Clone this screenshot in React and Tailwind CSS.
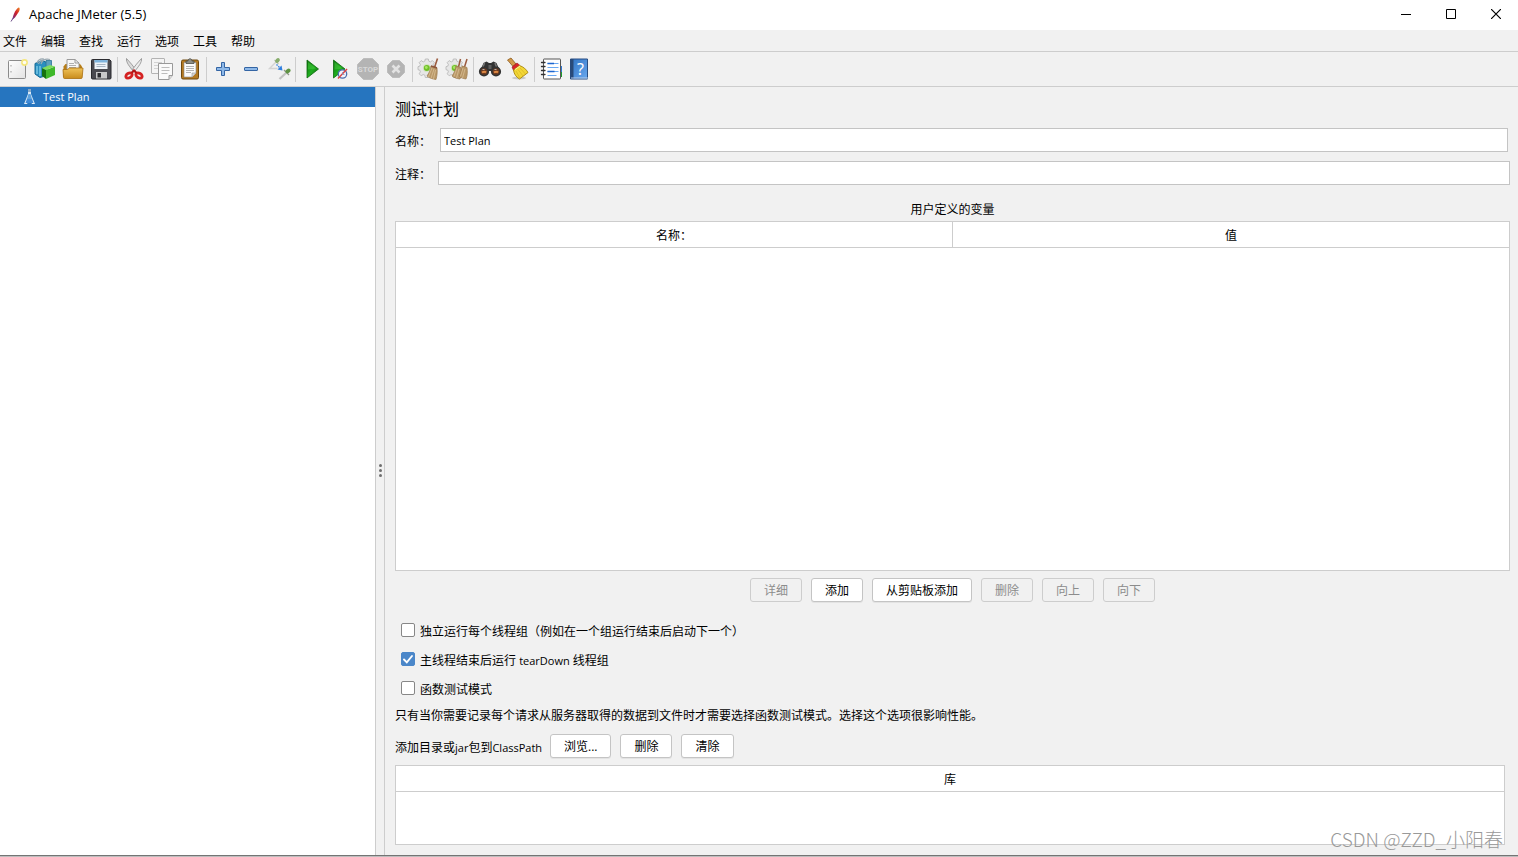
import clsx from 'clsx'
import { useState } from 'react'

const menus = ['文件', '编辑', '查找', '运行', '选项', '工具', '帮助']

function Gradients() {
  return (
    <svg aria-hidden="true" className="absolute h-0 w-0">
      <defs>
        <linearGradient id="green" x1="0" x2="1" y1="0" y2="1">
          <stop offset="0" stopColor="#0a6b0c" />
          <stop offset="0.5" stopColor="#1fae1f" />
          <stop offset="1" stopColor="#0b5a0b" />
        </linearGradient>
        <linearGradient id="folder" x1="0" x2="0" y1="0" y2="1">
          <stop offset="0" stopColor="#f0c35a" />
          <stop offset="1" stopColor="#c98c1c" />
        </linearGradient>
        <linearGradient id="paper" x1="0" x2="1" y1="0" y2="1">
          <stop offset="0" stopColor="#ffffff" />
          <stop offset="1" stopColor="#e2e2e2" />
        </linearGradient>
        <linearGradient id="book" x1="0" x2="1" y1="0" y2="1">
          <stop offset="0" stopColor="#2f74c4" />
          <stop offset="1" stopColor="#6aa8ee" />
        </linearGradient>
        <linearGradient id="quill" x1="1" x2="0" y1="0" y2="1">
          <stop offset="0" stopColor="#f08a24" />
          <stop offset="0.45" stopColor="#d2232a" />
          <stop offset="1" stopColor="#6a2b86" />
        </linearGradient>
      </defs>
    </svg>
  )
}

function Icon({ children }) {
  return (
    <svg aria-hidden="true" className="h-6 w-6" fill="none" viewBox="0 0 24 24">
      {children}
    </svg>
  )
}

function NewIcon() {
  return (
    <Icon>
      <rect fill="url(#paper)" height="18" rx="1" stroke="#8b8b8b" width="17" x="3.5" y="3.5" />
      <path d="M6 8v1.5M6 14v1.5" stroke="#999" />
      <circle cx="19.5" cy="5.5" fill="#f5e67c" r="3.4" />
      <circle cx="19.5" cy="5.5" fill="#fffdf0" r="1.8" />
    </Icon>
  )
}

function TemplatesIcon() {
  return (
    <Icon>
      <path d="M2 6.500 9 3.500l5 2v13L7 20.500 2 17z" fill="#2a8fc0" stroke="#156a96" />
      <path d="M13 3.500h5.500V10H13z" fill="#5b9fbe" stroke="#2a7398" strokeWidth="0.8" />
      <path d="M4 6c1-3 4-4.500 7-4M8 7c1.500-4 5-5.500 9-4.500M5.500 7c1-3 3-4 6-4" stroke="#9aa9b2" strokeWidth="1.2" />
      <path d="M4 9v8M7 9v10" stroke="#7ccbe8" strokeWidth="1.4" />
      <path d="m9 11 4 2v9l-4-3z" fill="#14710f" />
      <path d="m13 13 9-3.500v8.500l-9 4z" fill="#3fb82a" />
      <path d="m9 11 8-3 5 1.500-9 3.500z" fill="#7fdc5f" />
    </Icon>
  )
}

function OpenIcon() {
  return (
    <Icon>
      <path d="M2.500 20V9.500l2-2.500H19l2 2.500V20z" fill="#b77d16" />
      <path d="M6 14V2.500h8L18 6v8z" fill="#f7f7f7" stroke="#9b9b9b" />
      <path d="M8 6.500h5M8 8.500h7M8 10.500h7" stroke="#b0b0b0" />
      <path d="M14 2.500V6h4" stroke="#9b9b9b" />
      <path d="M2 12.500h4.500l2-1.500h13.500l-.8 9.500c0 .6-.5 1-1 1H3.500c-.6 0-1-.4-1-1z" fill="url(#folder)" stroke="#a86f10" strokeWidth="0.8" />
    </Icon>
  )
}

function SaveIcon() {
  return (
    <Icon>
      <path d="M2.500 3.500c0-.6.4-1 1-1h17l1.500 1.500v17c0 .6-.4 1-1 1H3.500c-.6 0-1-.4-1-1z" fill="#4a4a50" stroke="#2b2b2f" />
      <path d="M5.500 3h13v9h-13z" fill="#eef3f8" />
      <path d="M5.500 3h13v2.500h-13z" fill="#7fb4dd" />
      <path d="M7.500 7.500h9M7.500 9.500h9" stroke="#a6b4c2" />
      <path d="M7 15h11v6.500H7z" fill="#c9c9c9" />
      <path d="M8.500 16h3.500v4.500H8.500z" fill="#2c2c30" />
    </Icon>
  )
}

function CutIcon() {
  return (
    <Icon>
      <path d="M4.500 1.500c-.5 4 3 8 7 13l2.500-1.500C11 9 8 5 4.500 1.500z" fill="#dcdcdc" stroke="#8b8b8b" strokeWidth="0.8" />
      <path d="M19.500 1.500c.5 4-3 8-7 13L10 13c3-4 6-8 9.500-11.500z" fill="#ececec" stroke="#8b8b8b" strokeWidth="0.8" />
      <ellipse cx="7" cy="18.500" rx="3.400" ry="2.300" stroke="#d42222" strokeWidth="2.800" transform="rotate(-30 7 18.500)" />
      <ellipse cx="17" cy="18.500" rx="3.400" ry="2.300" stroke="#d42222" strokeWidth="2.800" transform="rotate(30 17 18.500)" />
      <path d="m9.500 16 2.500-2.500 2.500 2.500" stroke="#b51414" strokeWidth="2.200" />
    </Icon>
  )
}

function CopyIcon() {
  return (
    <Icon>
      <rect fill="#f4f4f4" height="15" rx="0.5" stroke="#b3b3b3" width="13" x="1.500" y="1.500" />
      <path d="M4 5.500h8M4 8.500h8M4 11.500h6" stroke="#d2d2d2" />
      <path d="M8.500 6.500h14v12L19 22.500H8.500z" fill="#fafafa" stroke="#999" />
      <path d="M11.500 10.500h8M11.500 13.500h8M11.500 16.500h6" stroke="#bcbcbc" />
      <path d="M19 22.500v-4h3.500" fill="#ddd" stroke="#999" />
    </Icon>
  )
}

function PasteIcon() {
  return (
    <Icon>
      <rect fill="#b57a22" height="19" rx="1.500" stroke="#6f480e" width="17" x="3.500" y="3" />
      <path d="M6 5.500h12v10.500l-4 4H6z" fill="#fbfbfb" stroke="#8a8a8a" strokeWidth="0.600" />
      <path d="M8 9.500h8M8 11.500h8M8 13.500h8M8 15.500h5" stroke="#b3b3b3" />
      <path d="M14 20v-4h4" fill="#d7d7d7" stroke="#999" strokeWidth="0.600" />
      <path d="M8 6.500V4h2c0-3 4-3 4 0h2v2.500z" fill="#8d8d85" stroke="#4d4d48" strokeWidth="0.800" />
    </Icon>
  )
}

function ExpandIcon() {
  return (
    <Icon>
      <path d="M10.500 5.500h3v5h5v3h-5v5h-3v-5h-5v-3h5z" fill="#8db8e8" stroke="#3465a4" strokeLinejoin="round" />
    </Icon>
  )
}

function CollapseIcon() {
  return (
    <Icon>
      <rect fill="#8db8e8" height="3" rx="0.500" stroke="#3465a4" width="13" x="5.500" y="10.500" />
    </Icon>
  )
}

function ToggleIcon() {
  return (
    <Icon>
      <path d="M9 5 2.500 11.500h8" stroke="#d3d3d3" strokeWidth="1.400" />
      <path d="m7.500 3 4 4" stroke="#b9c2b2" strokeWidth="1.300" />
      <ellipse cx="10.500" cy="3.500" fill="#87ad6c" rx="2.600" ry="2" transform="rotate(-40 10.500 3.500)" />
      <path d="m19 16-6.500 6" stroke="#c2c2c2" strokeWidth="2.200" />
      <path d="m17 13 5 5" stroke="#8f968a" strokeWidth="1.300" />
      <ellipse cx="21" cy="14" fill="#5f9443" rx="2.800" ry="2" transform="rotate(-40 21 14)" />
      <path d="m9.500 7.500 3.500 3.500" stroke="#2f7fe0" strokeDasharray="1.500 1" strokeWidth="1.300" />
      <path d="m15.500 13.500-5-1 4-4z" fill="#2f7fe0" />
    </Icon>
  )
}

function StartIcon() {
  return (
    <Icon>
      <path d="M7 3v18l11.500-9z" fill="url(#green)" stroke="#0c6b0c" strokeLinejoin="round" strokeWidth="0.800" />
      <path d="m8 5 8 6.500-8 1z" fill="#46cb3c" opacity="0.550" />
    </Icon>
  )
}

function StartNoPausesIcon() {
  return (
    <Icon>
      <path d="M5.500 3v18L17 12z" fill="url(#green)" stroke="#0c6b0c" strokeLinejoin="round" strokeWidth="0.800" />
      <path d="m6.500 5 8 6.500-8 1z" fill="#46cb3c" opacity="0.550" />
      <circle cx="14.500" cy="17" fill="#f1f3fb" r="4.200" stroke="#4b6fae" strokeWidth="1.300" />
      <path d="m10 21.500 9-9.500" stroke="#dd4343" strokeWidth="1.500" />
      <path d="M14.500 15v2.500h2" stroke="#7d93bd" strokeWidth="0.800" />
    </Icon>
  )
}

function StopIcon() {
  return (
    <Icon>
      <path d="M7.500 1.500h9l6 6v9l-6 6h-9l-6-6v-9z" fill="#b4b4b4" stroke="#bdbdbd" />
      <text fill="#d8d8d8" fontFamily="Roboto, sans-serif" fontSize="8" fontWeight="bold" textAnchor="middle" x="12" y="15">STOP</text>
    </Icon>
  )
}

function ShutdownIcon() {
  return (
    <Icon>
      <path d="M8.500 3.500h7l5 5v7l-5 5h-7l-5-5v-7z" fill="#b4b4b4" stroke="#bdbdbd" />
      <path d="m8.500 8.500 7 7m0-7-7 7" stroke="#e2e2e2" strokeWidth="2.600" />
    </Icon>
  )
}

function Gear() {
  return (
    <>
      <path
        d="M8.300 2h3l.5 2.200 1.600.7 2-1.300 2 2-1.200 2 .6 1.500 2.200.6v3l-2.200.5-.6 1.600 1.200 2-2 2-2-1.300-1.600.7-.5 2.300h-3l-.5-2.300-1.600-.7-2 1.300-2-2 1.200-2-.6-1.600L1 12.700v-3l1.800-.6.6-1.500-1.200-2 2-2 2 1.300 1.600-.7z"
        fill="#e6e6e6"
        stroke="#b4b4b4"
        strokeWidth="0.800"
      />
      <circle cx="9.800" cy="11" fill="#d4e3c4" r="4" />
      <circle cx="9.800" cy="11" fill="#6fbf25" r="3" />
      <circle cx="9.300" cy="10.500" fill="#a6e665" r="1.400" />
    </>
  )
}

function ClearIcon() {
  return (
    <Icon>
      <Gear />
      <path d="m20.500 1.500-3 9" stroke="#9a5a3e" strokeWidth="1.600" />
      <path d="m14 9 6 2c.5 4 0 8-1 11.500-3.500-.5-7-1.500-9-3.500 2-3 3.500-6 4-10z" fill="#b99868" stroke="#9c7a4e" strokeWidth="0.700" />
      <path d="m15 11-3.500 9M17 12l-3 9.500M18.500 13l-2 9" stroke="#d9bf95" strokeWidth="0.800" />
      <path d="m14 9 6 2" stroke="#8d563c" strokeWidth="1.400" />
    </Icon>
  )
}

function ClearAllIcon() {
  return (
    <Icon>
      <Gear />
      <path d="m15.500 2-2 8M22 2l-2.500 8" stroke="#9a5a3e" strokeWidth="1.500" />
      <path d="m11 9 5 1.500c1 4 .5 8-1 11.500-4-.5-6-1.500-8-3 2-3 3.500-6 4-10z" fill="#b99868" stroke="#9c7a4e" strokeWidth="0.700" />
      <path d="m17 9 5 1.500c.5 4 .5 8-1 11.500-3-.5-5-1-7-3 2-3 2.500-6 3-10z" fill="#b99868" stroke="#9c7a4e" strokeWidth="0.700" />
      <path d="m12 11-3 8.500M14 12l-2.500 9M18 11l-2.500 8.500M20 12l-2.500 9" stroke="#d9bf95" strokeWidth="0.800" />
    </Icon>
  )
}

function SearchIcon() {
  return (
    <Icon>
      <path d="m2 14 3.500-8 3-1.500L11 6h2l2.500-1.500 3 1.500L22 14l-5 3-3.500-3h-3L7 17z" fill="#333" />
      <path d="m5 10 1.500-4M18.500 10 17 6" stroke="#777" strokeWidth="1.500" />
      <path d="M10.500 8h3v4h-3z" fill="#5e5e5e" />
      <circle cx="6" cy="14.500" fill="#6b3a20" r="4.200" stroke="#333" strokeWidth="1.800" />
      <circle cx="18" cy="14.500" fill="#6b3a20" r="4.200" stroke="#333" strokeWidth="1.800" />
      <path d="M4 15.500c1.500-1 3-1 4 0M16 15.500c1.500-1 3-1 4 0" stroke="#df8944" strokeWidth="2" />
      <path d="M4.500 12.500h2M16.500 12.500h2" stroke="#b5b5b5" />
    </Icon>
  )
}

function SearchResetIcon() {
  return (
    <Icon>
      <ellipse cx="13" cy="21" fill="#c9c9c9" rx="7" ry="1.500" />
      <path d="m1.500 3 3.500-2 5 6-3 2.500z" fill="#d39a4a" stroke="#8c5b1d" strokeWidth="0.800" />
      <path d="m6 10 5-4 3 2.500-6.500 5z" fill="#d8232a" stroke="#991219" strokeWidth="0.600" />
      <path d="m7.500 13 6-4.500c4 1.500 6.500 3.500 8.500 7l-8.500 6.500c-3.500-2-5.500-5-6-9z" fill="#f2d736" stroke="#a8860c" strokeWidth="0.900" />
      <path d="m10 14 4 7M12 12.500l5 6.500M14 11l5.500 6" stroke="#dcb827" strokeWidth="0.800" />
      <path d="m9 12.500 5-3.500" stroke="#fff0a0" />
    </Icon>
  )
}

function FunctionHelperIcon() {
  return (
    <Icon>
      <path d="M18 9h5v6h-5z" fill="#3178d6" />
      <path d="M18 15h5v5h-5z" fill="#1d9b2d" />
      <rect fill="#fff" height="20" rx="0.5" stroke="#555" width="17" x="4.500" y="2" />
      <path d="M8.500 6.500h11M8.500 10.500h11M8.500 14.500h11M8.500 18.500h9" stroke="#6aa9f2" />
      <path d="M8.500 6.500H15M8.500 14.500h7" stroke="#1d66cf" strokeWidth="1.400" />
      <path d="M2.500 5.500H6M2.500 9.500H6M2.500 13.500H6M2.500 17.500H6" stroke="#333" strokeLinecap="round" strokeWidth="1.300" />
    </Icon>
  )
}

function HelpIcon() {
  return (
    <Icon>
      <path d="M3.500 2h17v20h-17z" fill="url(#book)" stroke="#284d82" />
      <path d="M3.500 2h3v20h-3z" fill="#294a78" />
      <path d="M4 21h17" stroke="#b7cdea" />
      <text fill="#fff" fontFamily="Noto Sans, sans-serif" fontSize="16" textAnchor="middle" x="13.500" y="17.500">?</text>
    </Icon>
  )
}

const toolGroups = [
  [['新建', NewIcon], ['模板', TemplatesIcon], ['打开', OpenIcon], ['保存', SaveIcon]],
  [['剪切', CutIcon], ['复制', CopyIcon], ['粘贴', PasteIcon]],
  [['展开', ExpandIcon], ['折叠', CollapseIcon], ['切换', ToggleIcon]],
  [['启动', StartIcon], ['不停顿开始', StartNoPausesIcon], ['停止', StopIcon, true], ['关闭', ShutdownIcon, true]],
  [['清除', ClearIcon], ['清除全部', ClearAllIcon]],
  [['查找', SearchIcon], ['重置搜索', SearchResetIcon]],
  [['函数助手', FunctionHelperIcon], ['帮助', HelpIcon]],
]

function TitleBar() {
  return (
    <header className="flex h-[30px] items-center bg-white pl-2">
      <svg aria-hidden="true" className="h-4 w-4" fill="none" viewBox="0 0 16 16">
        <path d="M10.500.5c1.500 0 1.500 2 .5 4L7 10.500l-2.500 2C4.500 9.500 7 3 10.500.5z" fill="url(#quill)" />
        <path d="M5.500 10.500 3 14.500" stroke="#6a4a86" />
      </svg>
      <h1 className="ml-[5px] flex-1 text-[13px]">Apache JMeter (5.5)</h1>
      <button aria-label="最小化" className="flex h-full w-[45px] items-center justify-center" type="button">
        <svg className="h-[10px] w-[10px]" viewBox="0 0 10 10">
          <path d="M0 4.500h10" stroke="#000" />
        </svg>
      </button>
      <button aria-label="最大化" className="flex h-full w-[45px] items-center justify-center pb-[2px]" type="button">
        <svg className="h-[10px] w-[10px]" fill="none" viewBox="0 0 10 10">
          <path d="M.5.5h9v9h-9z" stroke="#000" />
        </svg>
      </button>
      <button aria-label="关闭" className="flex h-full w-[45px] items-center justify-center pb-[2px]" type="button">
        <svg className="h-[10px] w-[10px]" viewBox="0 0 10 10">
          <path d="m0 0 10 10M10 0 0 10" stroke="#000" strokeWidth="1.200" />
        </svg>
      </button>
    </header>
  )
}

function ToolBar() {
  return (
    <div className="flex h-[35px] items-center border-b border-[#cdcdcd] pl-[3px]" role="toolbar">
      {toolGroups.map((group, index) => (
        <div className="flex items-center" key={group[0][0]}>
          {index > 0 ? <span className="mx-[2px] h-[25px] w-px bg-[#cdcdcd]" /> : null}
          {group.map(([label, ToolIcon, disabled]) => (
            <button
              aria-label={label}
              className="flex h-7 w-7 items-center justify-center"
              disabled={disabled}
              key={label}
              type="button"
            >
              <ToolIcon />
            </button>
          ))}
        </div>
      ))}
    </div>
  )
}

function Button({ children, disabled }) {
  return (
    <button
      className={clsx(
        'h-6 rounded-[3px] border px-[13px] pt-[2px] leading-none',
        disabled
          ? 'border-[#cdcdcd] text-[#8c8c8c]'
          : 'border-[#c4c4c4] bg-white shadow-[0_1px_0_#e3e3e3]',
      )}
      disabled={disabled}
      type="button"
    >
      {children}
    </button>
  )
}

function CheckOption({ children, defaultChecked = false }) {
  const [checked, setChecked] = useState(defaultChecked)

  return (
    <label className="mb-px flex h-7 w-fit items-center gap-[5px] pl-[6px]">
      <span className="grid h-[14px] w-[14px]">
        <input
          checked={checked}
          className="col-start-1 row-start-1 h-[14px] w-[14px] appearance-none rounded-[2px] border border-[#878787] bg-white checked:border-[#4b87c9] checked:bg-[#4b87c9]"
          onChange={(event) => setChecked(event.target.checked)}
          type="checkbox"
        />
        {checked ? (
          <svg aria-hidden="true" className="pointer-events-none col-start-1 row-start-1" fill="none" viewBox="0 0 14 14">
            <path d="m3 7.500 2.800 2.800L11 4" stroke="#fff" strokeLinecap="round" strokeWidth="1.900" />
          </svg>
        ) : null}
      </span>
      <span className="pt-[3px]">{children}</span>
    </label>
  )
}

function DataTable({ columns, label }) {
  return (
    <table aria-label={label} className="w-full table-fixed border-collapse">
      <thead>
        <tr className="h-[25px]">
          {columns.map((column) => (
            <th
              className="border-b border-l border-[#cdcdcd] p-0 pt-[4px] text-center leading-4 font-normal first:border-l-0"
              key={column}
              scope="col"
            >
              {column}
            </th>
          ))}
        </tr>
      </thead>
    </table>
  )
}

function TestPlan() {
  const [name, setName] = useState('Test Plan')
  const [comment, setComment] = useState('')

  return (
    <main className="flex min-w-0 flex-1 flex-col pr-2 pb-[10px] pl-[10px]">
      <h2 className="pt-[10px] text-base leading-6">测试计划</h2>

      <div className="mt-[7px] flex h-6 items-center pr-[2px]">
        <label className="w-[45px] shrink-0 pt-[3px]" htmlFor="name">名称：</label>
        <input
          className="h-6 min-w-0 flex-1 border border-[#c4c4c4] bg-white px-[3px] text-[11px]"
          id="name"
          onChange={(event) => setName(event.target.value)}
          type="text"
          value={name}
        />
      </div>
      <div className="mt-[9px] flex h-6 items-center">
        <label className="w-[43px] shrink-0 pt-[3px]" htmlFor="comment">注释：</label>
        <input
          className="h-6 min-w-0 flex-1 border border-[#c4c4c4] bg-white px-[3px] text-[11px]"
          id="comment"
          onChange={(event) => setComment(event.target.value)}
          type="text"
          value={comment}
        />
      </div>

      <h3 className="mt-[17px] mb-[3px] text-center leading-4">用户定义的变量</h3>
      <div className="flex-1 border border-[#cdcdcd] bg-white">
        <DataTable columns={['名称：', '值']} label="用户定义的变量" />
      </div>
      <div className="mt-[7px] flex justify-center gap-[9px]">
        <Button disabled>详细</Button>
        <Button>添加</Button>
        <Button>从剪贴板添加</Button>
        <Button disabled>删除</Button>
        <Button disabled>向上</Button>
        <Button disabled>向下</Button>
      </div>

      <div className="mt-[14px]">
        <CheckOption>独立运行每个线程组（例如在一个组运行结束后启动下一个）</CheckOption>
        <CheckOption defaultChecked>
          主线程结束后运行 <span className="text-[11px]">tearDown</span> 线程组
        </CheckOption>
        <CheckOption>函数测试模式</CheckOption>
      </div>
      <p className="mt-[5px] leading-4">
        只有当你需要记录每个请求从服务器取得的数据到文件时才需要选择函数测试模式。选择这个选项很影响性能。
      </p>

      <div className="mt-[10px] flex items-center gap-[9px]">
        <span className="w-[146px] pt-[3px] whitespace-nowrap">
          添加目录或<span className="text-[11px]">jar</span>包到<span className="text-[11px]">ClassPath</span>
        </span>
        <Button>浏览...</Button>
        <Button>删除</Button>
        <Button>清除</Button>
      </div>
      <div className="mt-[7px] mr-[5px] h-20 border border-[#cdcdcd] bg-white">
        <DataTable columns={['库']} label="库" />
      </div>
    </main>
  )
}

function App() {
  return (
    <div className="relative flex min-h-screen flex-col bg-[#f1f1f1] font-['Open_Sans','Noto_Sans_CJK_SC',sans-serif] text-xs text-black">
      <Gradients />
      <TitleBar />

      <nav className="flex h-[22px] items-center gap-[14px] border-b border-[#cdcdcd] pt-[2px] pl-[3px]">
        {menus.map((menu) => (
          <button key={menu} type="button">{menu}</button>
        ))}
      </nav>
      <ToolBar />

      <div className="flex flex-1 border-b border-[#747474]">
        <aside className="w-[376px] shrink-0 border-r border-[#cdcdcd] bg-white">
          <ul role="tree">
            <li
              aria-selected="true"
              className="flex h-5 items-center gap-[6px] bg-[#2675bf] pl-[22px] text-[11px] text-white"
              role="treeitem"
            >
              <svg aria-hidden="true" className="h-4 w-[15px]" viewBox="0 0 15 16">
                <path d="M6 0h3v5l4 10h-3L7.500 10 5 15H2L6 5z" fill="#dbe9f6" />
                <path d="M6.500 5h2l1.500 5H5z" fill="#5da1dc" />
                <path d="M6 0h3v3H6z" fill="#8aa9c6" />
                <path d="M5 10h5l1.500 4h-8z" fill="#3f8ad6" />
              </svg>
              <span className="pt-px">Test Plan</span>
            </li>
          </ul>
        </aside>
        <div className="flex w-[9px] shrink-0 flex-col items-center justify-center gap-[2px] border-r border-[#cdcdcd] pb-[2px]">
          <span className="h-[3px] w-[3px] rounded-full bg-[#6e6e6e]" />
          <span className="h-[3px] w-[3px] rounded-full bg-[#6e6e6e]" />
          <span className="h-[3px] w-[3px] rounded-full bg-[#6e6e6e]" />
        </div>
        <TestPlan />
      </div>
      <div className="h-px bg-[#bdbdbd]" />

      <span className="pointer-events-none absolute right-[15px] bottom-[6px] font-['Noto_Sans_CJK_SC',sans-serif] text-[19px] leading-6 font-light text-[#999999]">
        CSDN @ZZD_小阳春
      </span>
    </div>
  )
}

export default App
